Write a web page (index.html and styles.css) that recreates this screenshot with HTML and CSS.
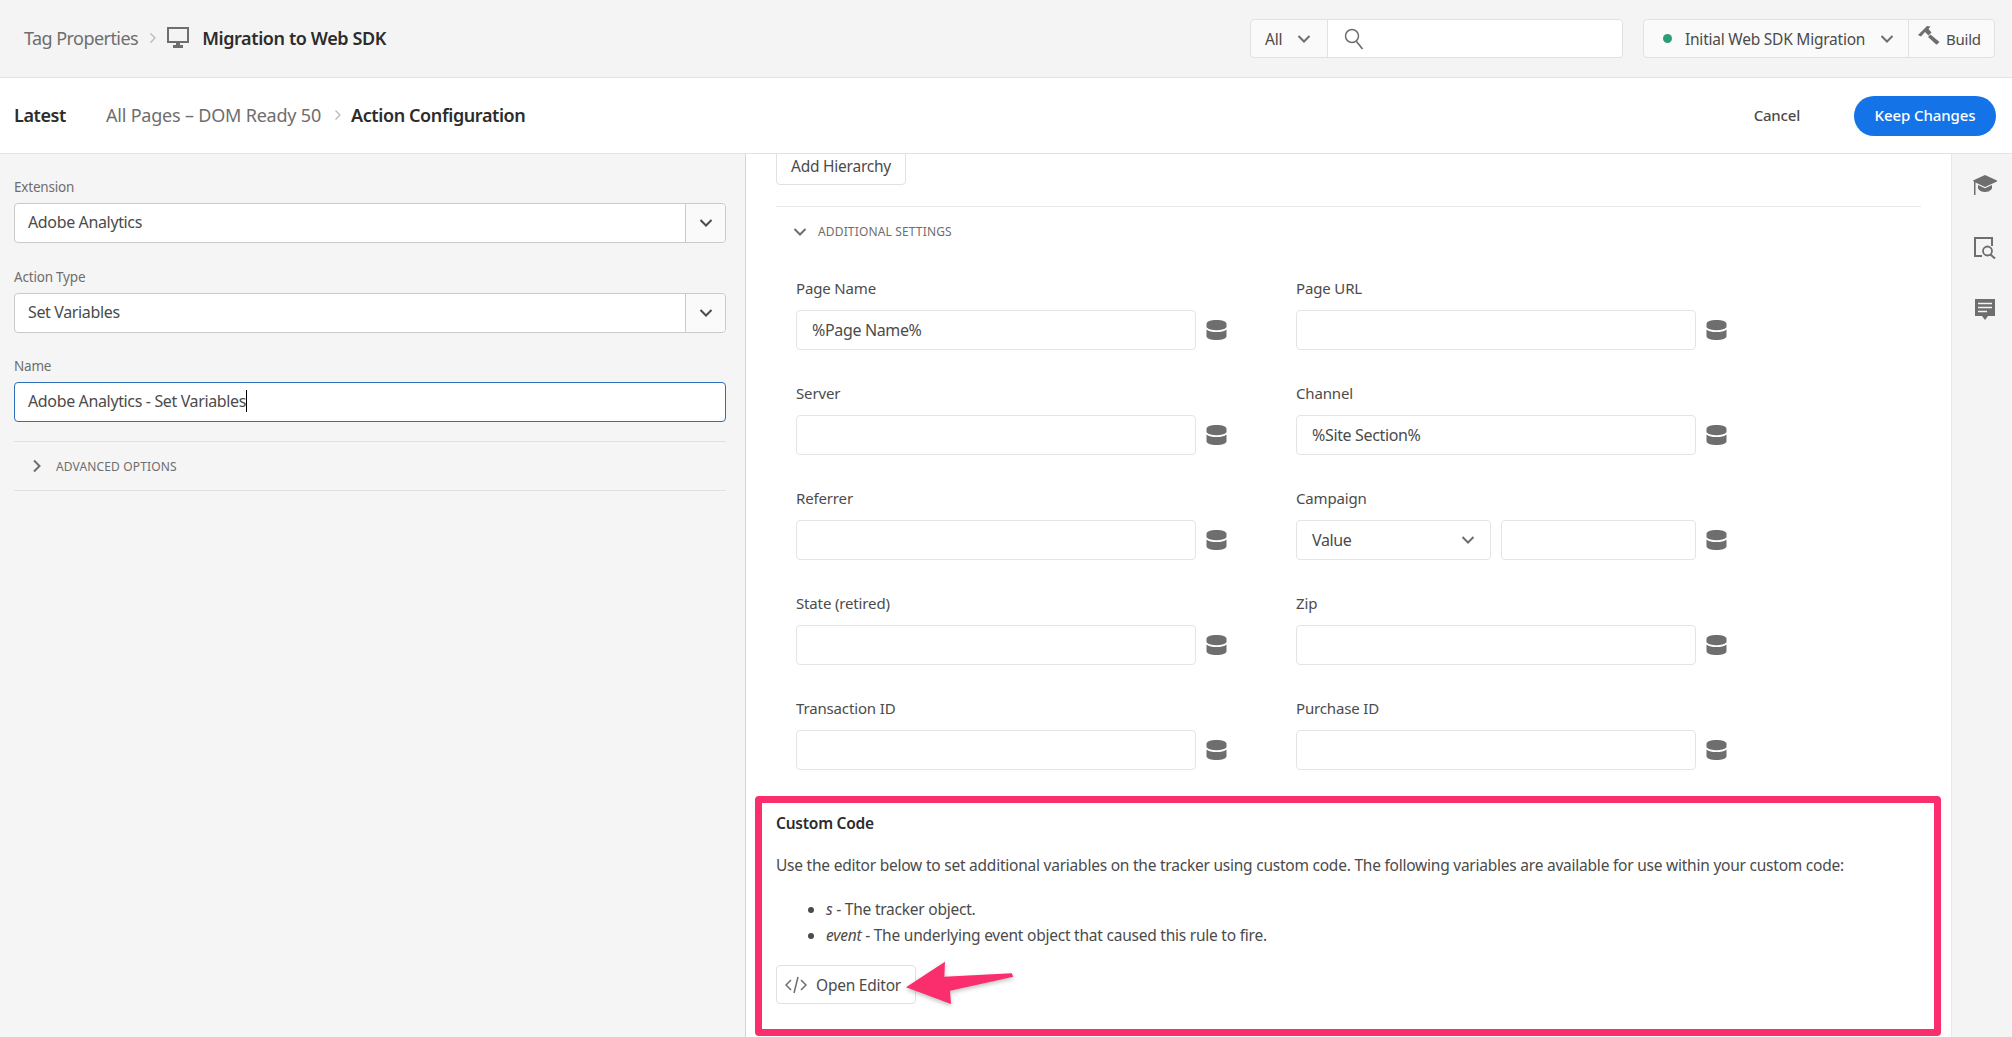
FILE: index.html
```html
<!DOCTYPE html>
<html lang="en">
<head>
    <meta charset="UTF-8">
    <title>Action Configuration</title>
    <link rel="stylesheet" href="styles.css">
</head>
<body>
    <svg class="defs" width="0" height="0">
        <symbol id="db" viewBox="0 0 21 20">
            <path d="M.5 3.800C.5 1.500 5 0 10.500 0s10 1.500 10 3.800v3.400c-2 2.200-5.800 3-10 3s-8-.8-10-3z"/>
            <path d="M.5 9.400c2 2 5.800 2.600 10 2.600s8-.6 10-2.600v6.800c0 2.300-4.500 3.800-10 3.800s-10-1.500-10-3.800z"/>
        </symbol>
        <symbol id="chev" viewBox="0 0 14 10">
            <path d="M1.500 2 7 7.500 12.500 2" fill="none" stroke="currentColor" stroke-width="2"/>
        </symbol>
    </svg>

    <header class="topbar">
        <div class="crumbs">
            <span class="crumb-link">Tag Properties</span>
            <svg class="crumb-sep" width="8" height="12" viewBox="0 0 8 12"><path d="M1.500 1.500 6 6l-4.500 4.500" fill="none" stroke="#b5b5b5" stroke-width="1.200"/></svg>
            <svg class="monitor" width="22" height="21" viewBox="0 0 22 21"><path d="M0 0h22v16H13v2h3v3H6v-3h3v-2H0zM2 2v12h18V2z" fill="#6e6e6e"/></svg>
            <span class="crumb-current">Migration to Web SDK</span>
        </div>
        <div class="top-tools">
            <div class="search-group">
                <div class="scope">All <svg class="chev" width="14" height="10"><use href="#chev"/></svg></div>
                <div class="search-box">
                    <svg width="20" height="22" viewBox="0 0 20 22"><circle cx="8" cy="8" r="6.500" fill="none" stroke="#6e6e6e" stroke-width="1.500"/><path d="M12.500 13.500 18.500 21" stroke="#6e6e6e" stroke-width="1.700"/></svg>
                </div>
            </div>
            <div class="build-group">
                <div class="library"><span class="dot"></span><span class="library-name">Initial Web SDK Migration</span><svg class="chev" width="14" height="10"><use href="#chev"/></svg></div>
                <div class="build">
                    <svg width="22" height="19" viewBox="0 0 22 19"><path d="M0 9 9 0l3.500.5-2 2.500 3 3.500-3 3L7 6l-4 4.500zM10 11l2.500-2.500L21.500 16l-3 2.800z" fill="#6e6e6e"/></svg>
                    <span>Build</span>
                </div>
            </div>
        </div>
    </header>

    <div class="subbar">
        <div class="crumbs">
            <span class="latest">Latest</span>
            <span class="crumb-link sub-first">All Pages – DOM Ready 50</span>
            <svg class="crumb-sep" width="8" height="12" viewBox="0 0 8 12"><path d="M1.500 1.500 6 6l-4.500 4.500" fill="none" stroke="#b5b5b5" stroke-width="1.200"/></svg>
            <span class="crumb-current">Action Configuration</span>
        </div>
        <div class="actions">
            <span class="cancel">Cancel</span>
            <button class="keep">Keep Changes</button>
        </div>
    </div>

    <div class="main">
        <aside class="sidebar">
            <label class="side-label">Extension</label>
            <div class="combo"><div class="combo-value">Adobe Analytics</div><div class="combo-btn"><svg width="14" height="10"><use href="#chev"/></svg></div></div>
            <label class="side-label">Action Type</label>
            <div class="combo"><div class="combo-value">Set Variables</div><div class="combo-btn"><svg width="14" height="10"><use href="#chev"/></svg></div></div>
            <label class="side-label">Name</label>
            <div class="name-input"><span class="caret">Adobe Analytics - Set Variables</span></div>
            <div class="advanced">
                <svg width="10" height="14" viewBox="0 0 10 14"><path d="M2 1.500 7.500 7 2 12.500" fill="none" stroke="#6e6e6e" stroke-width="2"/></svg>
                <span class="section-title">ADVANCED OPTIONS</span>
            </div>
        </aside>

        <section class="content">
            <button class="btn add-hierarchy">Add Hierarchy</button>
            <div class="section-head">
                <svg class="chev" width="14" height="10"><use href="#chev"/></svg>
                <span class="section-title">ADDITIONAL SETTINGS</span>
            </div>
            <div class="fields">
                <div class="field">
                    <label>Page Name</label>
                    <div class="field-row"><input value="%Page Name%"><svg class="db" width="21" height="20"><use href="#db"/></svg></div>
                </div>
                <div class="field">
                    <label>Page URL</label>
                    <div class="field-row"><input><svg class="db" width="21" height="20"><use href="#db"/></svg></div>
                </div>
                <div class="field">
                    <label>Server</label>
                    <div class="field-row"><input><svg class="db" width="21" height="20"><use href="#db"/></svg></div>
                </div>
                <div class="field">
                    <label>Channel</label>
                    <div class="field-row"><input value="%Site Section%"><svg class="db" width="21" height="20"><use href="#db"/></svg></div>
                </div>
                <div class="field">
                    <label>Referrer</label>
                    <div class="field-row"><input><svg class="db" width="21" height="20"><use href="#db"/></svg></div>
                </div>
                <div class="field">
                    <label>Campaign</label>
                    <div class="field-row">
                        <div class="value-select">Value <svg class="chev" width="14" height="10"><use href="#chev"/></svg></div>
                        <input class="short">
                        <svg class="db" width="21" height="20"><use href="#db"/></svg>
                    </div>
                </div>
                <div class="field">
                    <label>State (retired)</label>
                    <div class="field-row"><input><svg class="db" width="21" height="20"><use href="#db"/></svg></div>
                </div>
                <div class="field">
                    <label>Zip</label>
                    <div class="field-row"><input><svg class="db" width="21" height="20"><use href="#db"/></svg></div>
                </div>
                <div class="field">
                    <label>Transaction ID</label>
                    <div class="field-row"><input><svg class="db" width="21" height="20"><use href="#db"/></svg></div>
                </div>
                <div class="field">
                    <label>Purchase ID</label>
                    <div class="field-row"><input><svg class="db" width="21" height="20"><use href="#db"/></svg></div>
                </div>
            </div>

            <div class="custom-code">
                <h3>Custom Code</h3>
                <p>Use the editor below to set additional variables on the tracker using custom code. The following variables are available for use within your custom code:</p>
                <ul>
                    <li><em>s</em> - The tracker object.</li>
                    <li><em>event</em> - The underlying event object that caused this rule to fire.</li>
                </ul>
                <button class="btn open-editor">
                    <svg width="22" height="20" viewBox="0 0 22 20"><path d="M6 5 1 10l5 5M16 5l5 5-5 5M13 2 9 18" fill="none" stroke="#6e6e6e" stroke-width="1.500"/></svg>
                    Open Editor
                </button>
            </div>
        </section>

        <nav class="rail">
            <svg width="24" height="22" viewBox="0 0 24 22"><path d="M12 0 24 5.500v1L12 12 2.500 7.500V20H1V6.500L0 6V5.500z M5 10l7 3.300L19 10v3.500c-1.500 2.500-4 3.500-7 3.500s-5.500-1-7-3.500z" fill="#6e6e6e"/></svg>
            <svg width="22" height="22" viewBox="0 0 22 22"><path d="M0 0h19v9h-2V2H2v16h6v2H0z" fill="#6e6e6e"/><circle cx="13.500" cy="14" r="4.500" fill="none" stroke="#6e6e6e" stroke-width="1.800"/><path d="M16.500 17.500 21 21.500" stroke="#6e6e6e" stroke-width="2"/></svg>
            <svg width="20" height="22" viewBox="0 0 20 22"><path d="M0 0h20v17h-7l-3 4-3-4H0z" fill="#6e6e6e"/><path d="M3 4.500h14M3 8.500h14M3 12.500h9" stroke="#f4f4f4" stroke-width="1.500"/></svg>
        </nav>
    </div>

    <svg class="arrow" width="120" height="60" viewBox="0 0 120 60"><path d="M6 28.300 45 2.700 44.300 17.700 111.700 14.300 113.300 17.700 50 31.700 51 45z" fill="#fa2d6d"/></svg>
</body>
</html>
```

FILE: styles.css
```css
* {
    box-sizing: border-box;
}
html, body {
    height: 100%;
}
body {
    margin: 0;
    overflow: hidden;
    display: flex;
    flex-direction: column;
    background: #fff;
    color: #4b4b4b;
    font-family: "Noto Sans", Arial, sans-serif;
    font-size: 15px;
}
.defs {
    position: absolute;
}
.chev {
    color: #6e6e6e;
}

/* top bars */
.topbar {
    height: 78px;
    flex: none;
    display: flex;
    justify-content: space-between;
    align-items: center;
    padding: 0 17px 0 24px;
    background: #f4f4f4;
    border-bottom: 1px solid #e3e3e3;
}
.crumbs {
    display: flex;
    align-items: center;
    margin-top: -2px;
}
.crumb-link {
    font-size: 18px;
    letter-spacing: -0.55px;
    color: #6e6e6e;
}
.crumb-sep {
    margin: 0 10px 0 11px;
}
.subbar .crumb-sep {
    margin: 0 9px 0 13px;
}
.monitor {
    margin-right: 13px;
}
.crumb-current {
    font-size: 18px;
    font-weight: 600;
    letter-spacing: -0.4px;
    color: #2c2c2c;
}
.top-tools {
    display: flex;
    gap: 20px;
}
.search-group, .build-group {
    height: 39px;
    display: flex;
    background: #fafafa;
    border: 1px solid #e1e1e1;
    border-radius: 4px;
    font-size: 15.500px;
    letter-spacing: -0.23px;
}
.search-group {
    width: 373px;
}
.scope {
    width: 76px;
    display: flex;
    align-items: center;
    gap: 15px;
    padding-left: 14px;
}
.search-box {
    flex: 1;
    display: flex;
    align-items: center;
    padding-left: 16px;
    background: #fff;
    border-left: 1px solid #e1e1e1;
    border-radius: 0 4px 4px 0;
}
.build-group {
    width: 352px;
}
.library {
    width: 264px;
    display: flex;
    align-items: center;
    padding-left: 19px;
}
.dot {
    width: 9px;
    height: 9px;
    border-radius: 50%;
    background: #2d9d78;
    margin-right: 13px;
}
.library-name {
    margin-right: 15px;
}
.build {
    flex: 1;
    display: flex;
    align-items: center;
    gap: 6px;
    padding-left: 9px;
    border-left: 1px solid #e1e1e1;
    font-size: 15px;
}
.build svg {
    margin-top: -6px;
}
.subbar {
    height: 76px;
    flex: none;
    display: flex;
    justify-content: space-between;
    align-items: center;
    padding: 0 16px 0 14px;
    border-bottom: 1px solid #e3e3e3;
}
.latest {
    font-size: 18px;
    font-weight: 600;
    letter-spacing: -0.4px;
    color: #2c2c2c;
}
.sub-first {
    margin-left: 40px;
    letter-spacing: -0.2px;
}
.actions {
    display: flex;
    align-items: center;
}
.cancel {
    margin-top: -2px;
    font-weight: 500;
    letter-spacing: -0.2px;
}
.keep {
    width: 142px;
    height: 40px;
    margin-left: 54px;
    padding: 0 0 2px;
    border: none;
    border-radius: 20px;
    background: #1473e6;
    color: #fff;
    font: 500 15px "Noto Sans", Arial, sans-serif;
    letter-spacing: -0.1px;
}

/* main area */
.main {
    flex: 1;
    min-height: 0;
    display: flex;
}
.sidebar {
    width: 746px;
    flex: none;
    padding: 23px 19px 0 14px;
    background: #f5f5f5;
    border-right: 1px solid #d5d5d5;
}
.side-label {
    display: block;
    height: 20px;
    margin-bottom: 6px;
    line-height: 20px;
    font-size: 13.500px;
    letter-spacing: -0.2px;
    color: #6e6e6e;
}
.combo {
    display: flex;
    height: 40px;
    margin-bottom: 23.500px;
    background: #fff;
    border: 1px solid #cacaca;
    border-radius: 4px;
    font-size: 16px;
    letter-spacing: -0.36px;
}
.combo-value {
    flex: 1;
    padding: 0 13px;
    line-height: 37px;
}
.combo-btn {
    width: 40px;
    display: flex;
    align-items: center;
    justify-content: center;
    background: #fafafa;
    border-left: 1px solid #cacaca;
    border-radius: 0 4px 4px 0;
    color: #4b4b4b;
}
.name-input {
    height: 40px;
    padding: 0 13px;
    line-height: 36px;
    background: #fff;
    border: 1px solid #2d6fb8;
    border-radius: 4px;
    font-size: 16px;
    letter-spacing: -0.36px;
}
.caret {
    display: inline-block;
    height: 22px;
    line-height: 22px;
    border-right: 1px solid #000;
}
.advanced {
    display: flex;
    align-items: center;
    gap: 14px;
    height: 50px;
    margin-top: 19px;
    padding-left: 18px;
    border-top: 1px solid #e1e1e1;
    border-bottom: 1px solid #e1e1e1;
}
.section-title {
    font-size: 12px;
    letter-spacing: 0.15px;
    color: #6e6e6e;
}

.content {
    flex: 1;
    min-width: 0;
    padding: 0 30px;
    overflow: hidden;
}
.btn {
    height: 39px;
    background: #fff;
    border: 1px solid #e1e1e1;
    border-radius: 4px;
    color: #4b4b4b;
    font: 15.500px "Noto Sans", Arial, sans-serif;
    letter-spacing: -0.23px;
}
.add-hierarchy {
    display: block;
    width: 130px;
    margin-top: -8px;
    padding: 0;
}
.section-head {
    display: flex;
    align-items: center;
    gap: 11px;
    height: 50px;
    margin-top: 21px;
    padding-left: 17px;
    border-top: 1px solid #e8e8e8;
}
.fields {
    display: grid;
    grid-template-columns: 500px 500px;
    row-gap: 33px;
    margin-top: 22px;
    padding-left: 20px;
}
.field label {
    display: block;
    height: 20px;
    margin-bottom: 12px;
    line-height: 20px;
    letter-spacing: -0.15px;
}
.field-row {
    display: flex;
    align-items: center;
}
.field-row input {
    width: 400px;
    height: 40px;
    padding: 0 15px;
    background: #fff;
    border: 1px solid #e4e4e4;
    border-radius: 4px;
    color: #4b4b4b;
    font: 16px "Noto Sans", Arial, sans-serif;
    letter-spacing: -0.35px;
}
.field-row input.short {
    width: 195px;
    margin-left: 10px;
}
.value-select {
    width: 195px;
    height: 40px;
    display: flex;
    align-items: center;
    justify-content: space-between;
    padding: 0 15px;
    border: 1px solid #e4e4e4;
    border-radius: 4px;
    font-size: 16px;
    letter-spacing: -0.35px;
}
.db {
    margin-left: 10px;
    fill: #6e6e6e;
}

/* highlighted box */
.custom-code {
    height: 240px;
    margin: 26px -20px 0 -21px;
    padding: 10px 14px 0;
    border: 7px solid #fa2d6d;
    border-radius: 4px;
    font-size: 15.500px;
    letter-spacing: -0.23px;
}
.custom-code h3 {
    margin: 0;
    font-size: 15.500px;
    line-height: 20px;
    font-weight: 600;
    color: #2c2c2c;
}
.custom-code p {
    margin: 22px 0 0;
    line-height: 20px;
}
.custom-code ul {
    margin: 21px 0 0;
    padding-left: 50px;
    line-height: 26px;
}
.open-editor {
    display: flex;
    align-items: center;
    gap: 9px;
    width: 140px;
    margin-top: 17px;
    padding-left: 8px;
}
.rail {
    width: 61px;
    flex: none;
    display: flex;
    flex-direction: column;
    align-items: center;
    gap: 40px;
    padding: 21px 0 0 5px;
    background: #f4f4f4;
    border-left: 1px solid #e8e8e8;
}
.arrow {
    position: absolute;
    left: 900px;
    top: 959px;
    filter: drop-shadow(0 2px 2px rgba(0, 0, 0, 0.25));
}
```
